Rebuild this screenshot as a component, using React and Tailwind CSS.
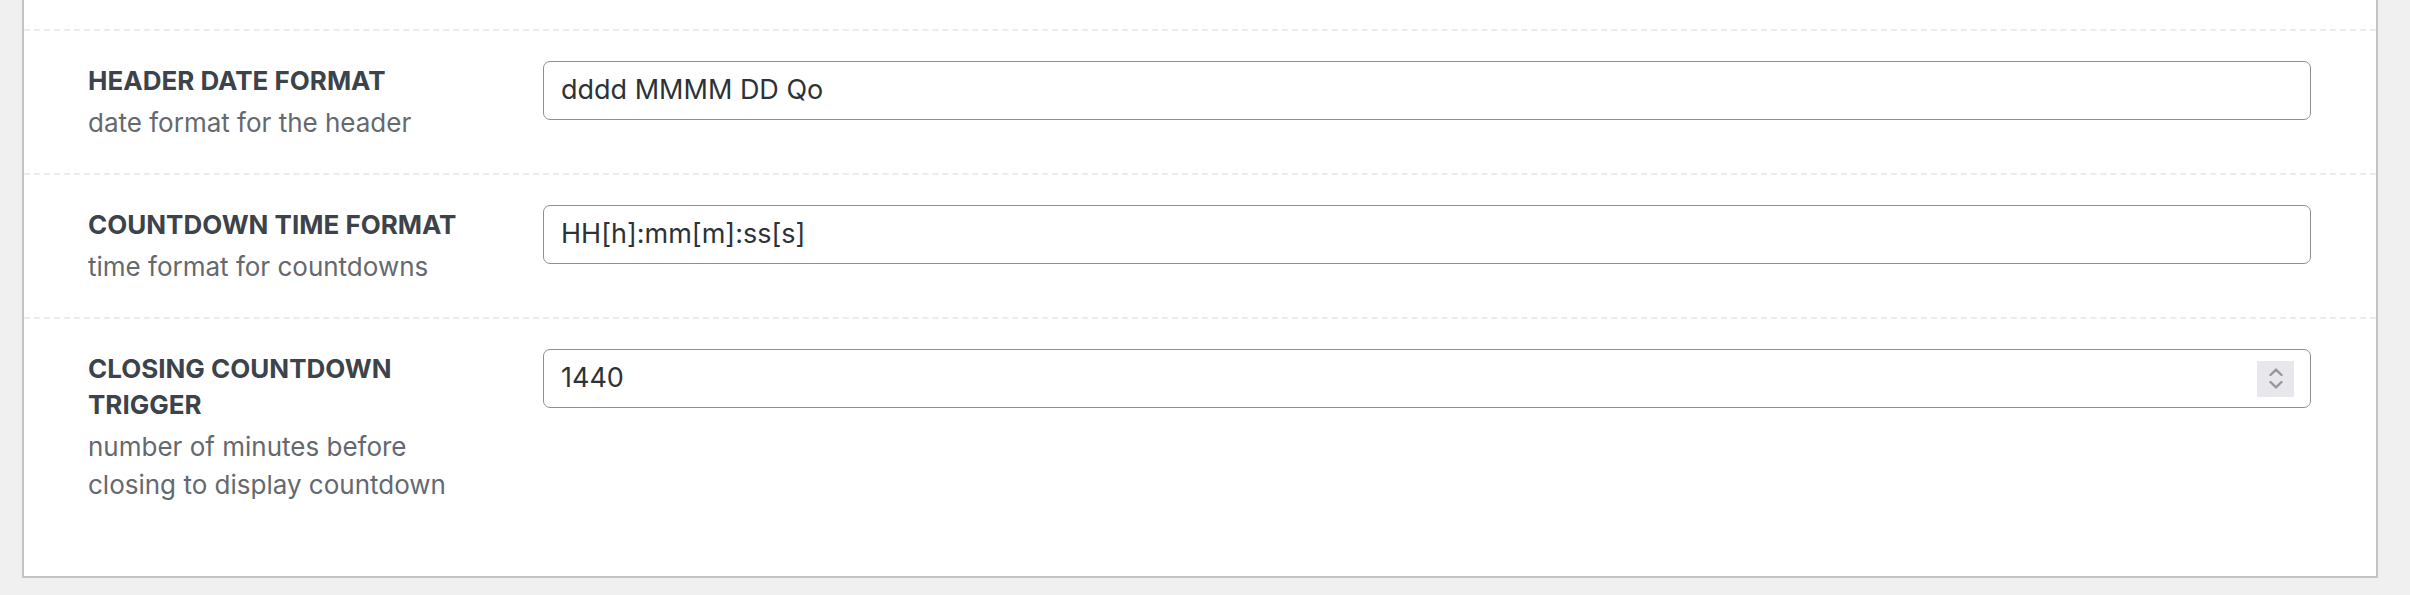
import React from 'react';

const rows = [
    {
        label: 'HEADER DATE FORMAT',
        desc: 'date format for the header',
        value: 'dddd MMMM DD Qo',
    },
    {
        label: 'COUNTDOWN TIME FORMAT',
        desc: 'time format for countdowns',
        value: 'HH[h]:mm[m]:ss[s]',
    },
    {
        label: 'CLOSING COUNTDOWN TRIGGER',
        desc: 'number of minutes before closing to display countdown',
        value: '1440',
        number: true,
    },
];

function Spinner() {
    return (
        <div className="w-[37px] h-[36px] bg-[#e8e7ec] flex flex-col items-center justify-center gap-[5px] shrink-0">
            <svg width="14" height="8" viewBox="0 0 14 8" fill="none">
                <path d="M1.5 7L7 1.6L12.5 7" stroke="#98979f" strokeWidth="2.4" strokeLinecap="round" strokeLinejoin="round" />
            </svg>
            <svg width="14" height="8" viewBox="0 0 14 8" fill="none">
                <path d="M1.5 1L7 6.4L12.5 1" stroke="#98979f" strokeWidth="2.4" strokeLinecap="round" strokeLinejoin="round" />
            </svg>
        </div>
    );
}

function SettingRow({ row }) {
    return (
        <div className="flex border-t-2 border-dashed border-[#ececec] pl-[64px] pt-[32px] pb-[31px]">
            <div className="w-[455px] shrink-0">
                <div className="max-w-[395px]">
                    <div className="text-[26px] leading-[36px] font-bold text-[#3c434a]">{row.label}</div>
                    <div className="mt-[5px] text-[26px] leading-[38px] text-[#646970]">{row.desc}</div>
                </div>
            </div>
            <div className="w-[1768px] h-[59px] -mt-[2px] rounded-[7px] border-[1.5px] border-[#8c8f94] bg-white flex items-center pl-[17px] pr-[16px]">
                <input
                    type="text"
                    readOnly
                    value={row.value}
                    className="flex-1 bg-transparent outline-none text-[27px] text-[#2c3338] font-['Inter',sans-serif]"
                />
                {row.number && <Spinner />}
            </div>
        </div>
    );
}

export default function App() {
    return (
        <div className="h-[595px] bg-[#f0f0f1] pl-[22px] font-['Inter',sans-serif]">
            <div className="w-[2356px] border-x-2 border-b-2 border-[#c3c4c7] bg-white pt-[29px] pb-[41px]">
                {rows.map((row, i) => (
                    <SettingRow key={i} row={row} />
                ))}
            </div>
        </div>
    );
}
